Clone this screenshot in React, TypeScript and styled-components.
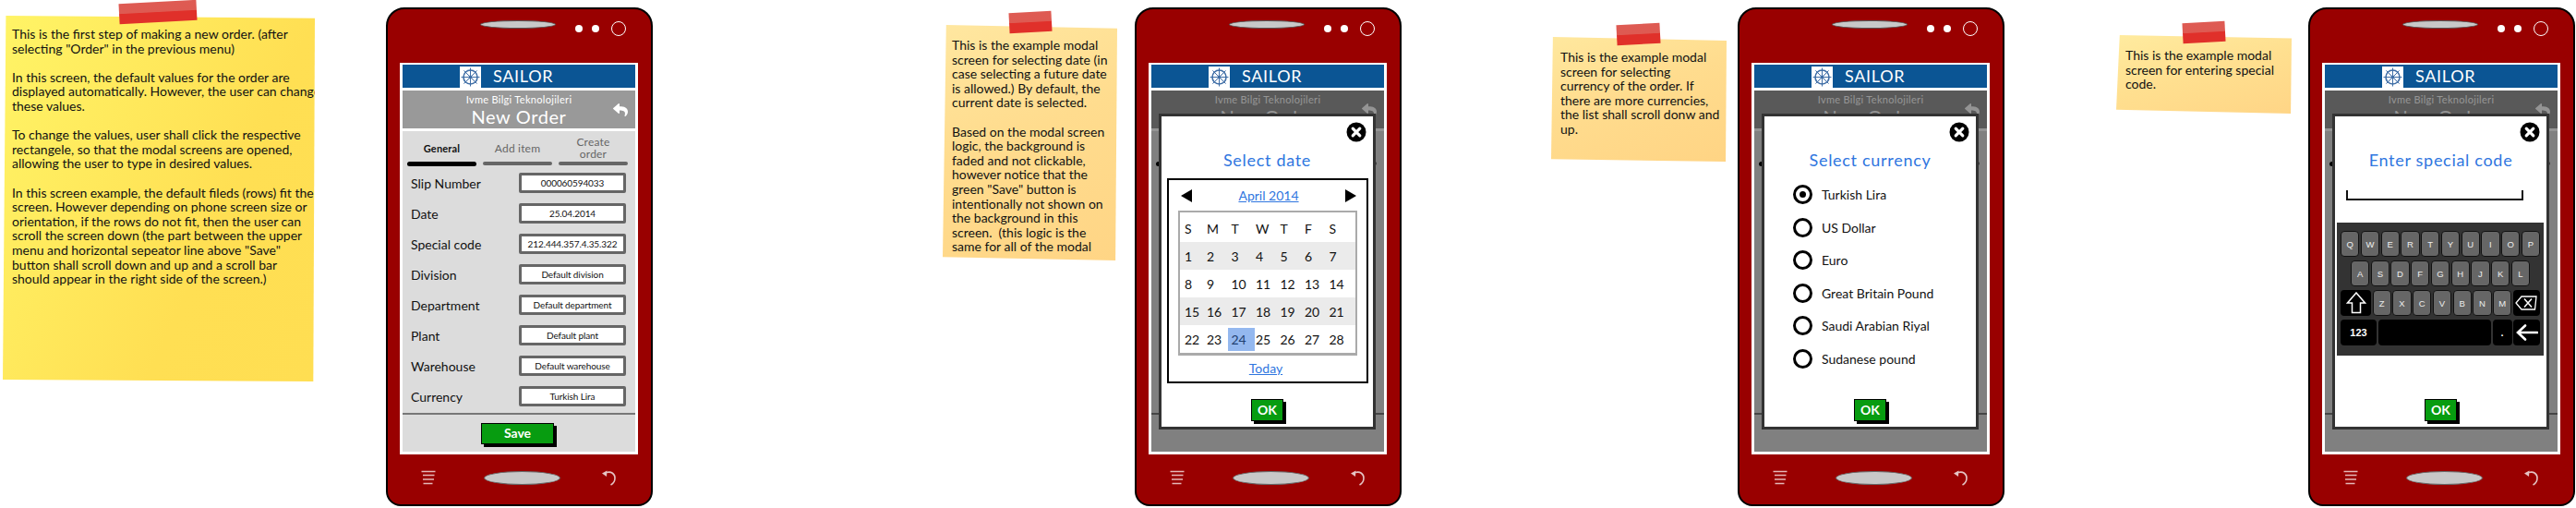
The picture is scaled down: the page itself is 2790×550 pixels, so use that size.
import React from "react";
import styled, { createGlobalStyle } from "styled-components";
import { FaReply } from "react-icons/fa";

const GlobalStyle = createGlobalStyle`
  html, body {
    margin: 0;
    padding: 0;
    background: #ffffff;
    font-family: "Lato", "Noto Sans", sans-serif;
  }
`;

const FIELDS = [
  ["Slip Number", "000060594033"],
  ["Date", "25.04.2014"],
  ["Special code", "212.444.357.4.35.322"],
  ["Division", "Default division"],
  ["Department", "Default department"],
  ["Plant", "Default plant"],
  ["Warehouse", "Default warehouse"],
  ["Currency", "Turkish Lira"],
];

const CURRENCIES = [
  "Turkish Lira",
  "US Dollar",
  "Euro",
  "Great Britain Pound",
  "Saudi Arabian Riyal",
  "Sudanese pound",
];

const WEEK = ["S", "M", "T", "W", "T", "F", "S"];
const WEEKS = [
  [1, 2, 3, 4, 5, 6, 7],
  [8, 9, 10, 11, 12, 13, 14],
  [15, 16, 17, 18, 19, 20, 21],
  [22, 23, 24, 25, 26, 27, 28],
];

const NOTE_1 = `This is the first step of making a new order. (after
selecting "Order" in the previous menu)

In this screen, the default values for the order are
displayed automatically. However, the user can change
these values.

To change the values, user shall click the respective
rectangele, so that the modal screens are opened,
allowing the user to type in desired values.

In this screen example, the default fileds (rows) fit the
screen. However depending on phone screen size or
orientation, if the rows do not fit, then the user can
scroll the screen down (the part between the upper
menu and horizontal sepeator line above "Save"
button shall scroll down and up and a scroll bar
should appear in the right side of the screen.)`;

const NOTE_2 = `This is the example modal
screen for selecting date (in
case selecting a future date
is allowed.) By default, the
current date is selected.

Based on the modal screen
logic, the background is
faded and not clickable,
however notice that the
green "Save" button is
intentionally not shown on
the background in this
screen.  (this logic is the
same for all of the modal`;

const NOTE_3 = `This is the example modal
screen for selecting
currency of the order. If
there are more currencies,
the list shall scroll donw and
up.`;

const NOTE_4 = `This is the example modal
screen for entering special
code.`;

const Logo = () => (
  <LogoBox>
    <svg width="23" height="23" viewBox="0 0 23 23" fill="none" stroke="#3f6ea6">
      <circle cx="11.5" cy="11.5" r="7.5" strokeWidth="1.6" />
      <circle cx="11.5" cy="11.5" r="2" fill="#3f6ea6" stroke="none" />
      <path
        d="M11.5 1.5v20M1.5 11.5h20M4.4 4.4l14.2 14.2M18.6 4.4L4.4 18.6"
        strokeWidth="1"
      />
    </svg>
  </LogoBox>
);

const CloseIcon = () => (
  <svg width="22" height="22" viewBox="0 0 22 22">
    <circle cx="11" cy="11" r="10.5" fill="#000" />
    <path
      d="M7.2 7.2l7.6 7.6M14.8 7.2l-7.6 7.6"
      stroke="#fff"
      strokeWidth="3.2"
      strokeLinecap="round"
    />
  </svg>
);

const MenuIcon = () => (
  <svg width="16" height="16" viewBox="0 0 16 16" stroke="#e5b8b8" fill="none">
    <path d="M0.5 1.5h15M2 5.5h12.5M2 10h12M2.5 14.5h10" strokeWidth="1.6" />
  </svg>
);

const BackIcon = () => (
  <svg width="17" height="17" viewBox="0 0 17 17" fill="none" stroke="#e5c4c4">
    <path d="M6 2.5c5-1.5 9 1.5 9 6 0 3-1.500 6-4.500 7.500" strokeWidth="1.6" />
    <path d="M1 3.500L6.500 0.500 6 7z" fill="#e5c4c4" stroke="none" />
  </svg>
);

const ShiftIcon = () => (
  <svg width="22" height="24" viewBox="0 0 22 24" fill="none" stroke="#fff">
    <path d="M11 1L1.500 12H6.500V22.500H15.500V12H20.500Z" strokeWidth="1.500" />
  </svg>
);

const BackspaceIcon = () => (
  <svg width="24" height="16" viewBox="0 0 24 16" fill="none" stroke="#fff">
    <path d="M7 1H23L21.500 15H7L1 8Z" strokeWidth="1.300" />
    <path d="M10 3.500l8 9M18 3.500l-8 9" strokeWidth="1.500" />
  </svg>
);

const EnterIcon = () => (
  <svg width="24" height="18" viewBox="0 0 24 18" fill="none" stroke="#fff">
    <path
      d="M23 9H3M10 1.500L2 9l8 7.500"
      strokeWidth="2.600"
      strokeLinecap="round"
    />
  </svg>
);

type NoteProps = {
  text: string;
  gap: number;
  top: number;
  width: number;
  height: number;
  tint: string;
  tape: [number, number, number];
  edge: string;
};

const Note = ({ text, gap, top, width, height, tint, tape, edge }: NoteProps) => (
  <NoteWrap $gap={gap} $top={top} $width={width} $height={height}>
    <NoteSheet $tint={tint} $edge={edge}>
      {text}
    </NoteSheet>
    <Tape $left={tape[0]} $top={tape[1]} $width={tape[2]} />
  </NoteWrap>
);

// behind a modal the labels and rows are covered, only the bars stick out
const OrderForm = ({ covered }: { covered: boolean }) => (
  <FormArea>
    <Tabs>
      <Tab>
        <TabLabel $active>{!covered && "General"}</TabLabel>
        <TabBar $active />
      </Tab>
      <Tab>
        <TabLabel>{!covered && "Add item"}</TabLabel>
        <TabBar />
      </Tab>
      <Tab>
        <TabLabel>
          {!covered && (
            <>
              Create
              <br />
              order
            </>
          )}
        </TabLabel>
        <TabBar />
      </Tab>
    </Tabs>
    <FieldList>
      {!covered &&
        FIELDS.map(([label, value]) => (
          <FieldRow key={label}>
            <FieldLabel>{label}</FieldLabel>
            <FieldValue>{value}</FieldValue>
          </FieldRow>
        ))}
    </FieldList>
    <Separator />
    {!covered && <SaveButton>Save</SaveButton>}
  </FormArea>
);

const Modal = ({ title, children }: { title: string; children: React.ReactNode }) => (
  <ModalBox>
    <CloseSpot>
      <CloseIcon />
    </CloseSpot>
    <ModalTitle>{title}</ModalTitle>
    {children}
    <OkButton>OK</OkButton>
  </ModalBox>
);

const Phone = ({ gap, children }: { gap: number; children?: React.ReactNode }) => (
  <PhoneBody $gap={gap}>
    <PhoneTop>
      <Speaker />
      <Dot />
      <Dot />
      <Lens />
    </PhoneTop>
    <Screen>
      <AppHeader>
        <Logo />
        <AppName>SAILOR</AppName>
      </AppHeader>
      <ScreenBody>
        <SubHeader>
          <Company>Ivme Bilgi Teknolojileri</Company>
          <PageTitle>New Order</PageTitle>
          <ReplySpot>
            <FaReply size={16} color="#fff" />
          </ReplySpot>
        </SubHeader>
        <OrderForm covered={!!children} />
        {children && <Fade />}
        {children}
      </ScreenBody>
    </Screen>
    <PhoneBottom>
      <MenuIcon />
      <HomeButton />
      <BackIcon />
    </PhoneBottom>
  </PhoneBody>
);

const Calendar = () => (
  <CalendarBox>
    <MonthRow>
      <ArrowLeft />
      <LinkText>April 2014</LinkText>
      <ArrowRight />
    </MonthRow>
    <DayTable>
      <DayRow>
        {WEEK.map((d, i) => (
          <DayCell key={i}>{d}</DayCell>
        ))}
      </DayRow>
      {WEEKS.map((week, i) => (
        <DayRow key={i} $shaded={i % 2 === 0}>
          {week.map((d) => (
            <DayCell key={d} $selected={d === 24}>
              {d}
            </DayCell>
          ))}
        </DayRow>
      ))}
    </DayTable>
    <TodayRow>
      <LinkText>Today</LinkText>
    </TodayRow>
  </CalendarBox>
);

const CurrencyList = () => (
  <RadioList>
    {CURRENCIES.map((name, i) => (
      <RadioRow key={name}>
        <Radio $checked={i === 0} />
        <RadioLabel>{name}</RadioLabel>
      </RadioRow>
    ))}
  </RadioList>
);

const Keyboard = () => (
  <>
    <InputLine />
    <KeyboardBox>
      <KeyRow>
        {"QWERTYUIOP".split("").map((k) => (
          <Key key={k}>{k}</Key>
        ))}
      </KeyRow>
      <KeyRow $inset={11}>
        {"ASDFGHJKL".split("").map((k) => (
          <Key key={k}>{k}</Key>
        ))}
      </KeyRow>
      <KeyRow>
        <DarkKey $width={33}>
          <ShiftIcon />
        </DarkKey>
        {"ZXCVBNM".split("").map((k) => (
          <Key key={k}>{k}</Key>
        ))}
        <DarkKey $width={29}>
          <BackspaceIcon />
        </DarkKey>
      </KeyRow>
      <KeyRow>
        <DarkKey $width={39}>123</DarkKey>
        <DarkKey $grow />
        <DarkKey $width={21}>.</DarkKey>
        <DarkKey $width={29}>
          <EnterIcon />
        </DarkKey>
      </KeyRow>
    </KeyboardBox>
  </>
);

export default function App() {
  return (
    <Page>
      <GlobalStyle />
      <Note
        text={NOTE_1}
        gap={3}
        top={15}
        width={338}
        height={398}
        tint="linear-gradient(115deg, #fff466 0%, #ffe95c 35%, #ffdf53 65%, #ffde52 100%)"
        tape={[126, -13, 84]}
        edge="polygon(1% 0.500%, 100% 1.200%, 99.500% 100%, 0% 99.500%)"
      />
      <Phone gap={77} />
      <Note
        text={NOTE_2}
        gap={314}
        top={27}
        width={189}
        height={255}
        tint="linear-gradient(160deg, #ffe7a0 0%, #ffdc8e 45%, #ffd585 100%)"
        tape={[72, -14, 46]}
        edge="polygon(2% 0%, 100% 1.500%, 99% 100%, 0% 98.500%)"
      />
      <Phone gap={19}>
        <Modal title="Select date">
          <Calendar />
        </Modal>
      </Phone>
      <Note
        text={NOTE_3}
        gap={162}
        top={40}
        width={190}
        height={135}
        tint="linear-gradient(160deg, #ffe89e 0%, #ffdc8e 45%, #ffd484 100%)"
        tape={[71, -14, 47]}
        edge="polygon(1% 0%, 100% 3%, 99.500% 100%, 0% 98%)"
      />
      <Phone gap={12}>
        <Modal title="Select currency">
          <CurrencyList />
        </Modal>
      </Phone>
      <Note
        text={NOTE_4}
        gap={121}
        top={38}
        width={190}
        height={85}
        tint="linear-gradient(165deg, #ffeb9f 0%, #ffdf8f 50%, #ffd586 100%)"
        tape={[72, -14, 46]}
        edge="polygon(2% 0%, 100% 4%, 99.500% 100%, 0% 95%)"
      />
      <Phone gap={18}>
        <Modal title="Enter special code">
          <Keyboard />
        </Modal>
      </Phone>
    </Page>
  );
}

const Page = styled.div`
  display: flex;
  align-items: flex-start;
  width: 2790px;
  height: 550px;
  overflow: hidden;
`;

const NoteWrap = styled.div<{ $gap: number; $top: number; $width: number; $height: number }>`
  position: relative;
  flex: none;
  margin-left: ${(p) => p.$gap}px;
  margin-top: ${(p) => p.$top}px;
  width: ${(p) => p.$width}px;
  height: ${(p) => p.$height}px;
`;

const NoteSheet = styled.div<{ $tint: string; $edge: string }>`
  box-sizing: border-box;
  height: 100%;
  padding: 14px 0 0 10px;
  background: ${(p) => p.$tint};
  clip-path: ${(p) => p.$edge};
  color: #111;
  font-size: 14px;
  line-height: 15.6px;
  white-space: pre;
`;

const Tape = styled.div<{ $left: number; $top: number; $width: number }>`
  position: absolute;
  left: ${(p) => p.$left}px;
  top: ${(p) => p.$top}px;
  width: ${(p) => p.$width}px;
  height: 22px;
  background: linear-gradient(180deg, #de5b53 0%, #de5a52 48%, #e0302a 52%, #e0302a 100%);
  transform: rotate(-3deg);
`;

const PhoneBody = styled.div<{ $gap: number }>`
  flex: none;
  box-sizing: border-box;
  display: flex;
  flex-direction: column;
  width: 289px;
  height: 540px;
  margin-top: 8px;
  margin-left: ${(p) => p.$gap}px;
  background: #990000;
  border: 2px solid #000;
  border-radius: 20px 20px 16px 16px;
`;

const PhoneTop = styled.div`
  display: flex;
  align-items: flex-start;
  gap: 10px;
  height: 58px;
  box-sizing: border-box;
  padding: 12px 0 0 100px;
`;

const Speaker = styled.div`
  box-sizing: border-box;
  width: 82px;
  height: 9px;
  margin-right: 11px;
  background: #c8c8c8;
  border: 1px solid #555;
  border-radius: 50%;
`;

const Dot = styled.div`
  width: 8px;
  height: 8px;
  margin-top: 5px;
  background: #fff;
  border-radius: 50%;
`;

const Lens = styled.div`
  box-sizing: border-box;
  width: 16px;
  height: 16px;
  margin: 1px 0 0 3px;
  border: 1.5px solid #fff;
  border-radius: 50%;
`;

const Screen = styled.div`
  box-sizing: border-box;
  display: flex;
  flex-direction: column;
  gap: 3px;
  width: 258px;
  height: 424px;
  margin-left: 13px;
  padding: 2px 3px 3px;
  background: #fff;
`;

const AppHeader = styled.div`
  flex: none;
  display: flex;
  align-items: flex-end;
  height: 25px;
  padding-left: 62px;
  background: #0b5594;
`;

const LogoBox = styled.div`
  display: flex;
  width: 23px;
  height: 23px;
  background: #fff;
`;

const AppName = styled.div`
  margin-left: 13px;
  height: 25px;
  color: #fff;
  font-size: 18px;
  line-height: 25px;
  letter-spacing: 0.7px;
`;

const ScreenBody = styled.div`
  position: relative;
  flex: 1;
  display: flex;
  flex-direction: column;
  gap: 3px;
`;

const SubHeader = styled.div`
  position: relative;
  flex: none;
  height: 41px;
  display: flex;
  flex-direction: column;
  align-items: center;
  background: #999;
  color: #fff;
`;

const Company = styled.div`
  margin-top: 3px;
  font-size: 11px;
  line-height: 14px;
  letter-spacing: 0.3px;
`;

const PageTitle = styled.div`
  font-size: 20px;
  line-height: 22px;
  letter-spacing: 0.6px;
`;

const ReplySpot = styled.div`
  position: absolute;
  right: 8px;
  top: 13px;
  display: flex;
`;

const FormArea = styled.div`
  flex: 1;
  display: flex;
  flex-direction: column;
  background: #dcdcdc;
`;

const Tabs = styled.div`
  display: flex;
  gap: 7px;
  padding: 3px 7px 0 5px;
`;

const Tab = styled.div`
  flex: none;
  width: 75px;
  display: flex;
  flex-direction: column;
`;

const TabLabel = styled.div<{ $active?: boolean }>`
  display: flex;
  align-items: center;
  justify-content: center;
  height: 30px;
  text-align: center;
  font-size: ${(p) => (p.$active ? "11px" : "12px")};
  font-weight: ${(p) => (p.$active ? 700 : 400)};
  line-height: 13px;
  letter-spacing: 0.2px;
  color: ${(p) => (p.$active ? "#111" : "#666")};
`;

const TabBar = styled.div<{ $active?: boolean }>`
  height: ${(p) => (p.$active ? 5 : 4)}px;
  background: ${(p) => (p.$active ? "#000" : "#666")};
  border-radius: 3px;
`;

const FieldList = styled.div`
  display: flex;
  flex-direction: column;
  gap: 11px;
  height: 253px;
  margin-top: 7px;
  padding: 0 10px 0 9px;
`;

const FieldRow = styled.div`
  display: flex;
  align-items: center;
  justify-content: space-between;
  height: 22px;
`;

const FieldLabel = styled.div`
  font-size: 14px;
  color: #111;
`;

const FieldValue = styled.div`
  box-sizing: border-box;
  width: 116px;
  height: 22px;
  border: 3px solid #666;
  border-radius: 2px;
  background: #fff;
  text-align: center;
  font-size: 10px;
  line-height: 16px;
  letter-spacing: -0.1px;
  color: #111;
  white-space: nowrap;
`;

const Separator = styled.div`
  height: 2px;
  margin-top: 7px;
  background: #777;
`;

const SaveButton = styled.div`
  box-sizing: border-box;
  align-self: center;
  width: 79px;
  height: 23px;
  margin: 9px 0 0 -3px;
  background: #079c10;
  border: 1.500px solid #000;
  box-shadow: 3px 3px 0 #000;
  color: #fff;
  text-align: center;
  font-size: 14px;
  font-weight: 700;
  line-height: 20px;
`;

const Fade = styled.div`
  position: absolute;
  inset: 0;
  background: rgba(0, 0, 0, 0.42);
`;

const ModalBox = styled.div`
  position: absolute;
  left: 8px;
  top: 25px;
  box-sizing: border-box;
  display: flex;
  flex-direction: column;
  width: 235px;
  height: 342px;
  padding-bottom: 6px;
  background: #fff;
  border: 3px solid #333;
`;

const CloseSpot = styled.div`
  position: absolute;
  right: 7px;
  top: 6px;
  display: flex;
`;

const ModalTitle = styled.div`
  margin-top: 36px;
  height: 22px;
  text-align: center;
  color: #2f76e0;
  font-size: 18px;
  line-height: 22px;
  letter-spacing: 0.7px;
`;

const OkButton = styled.div`
  box-sizing: border-box;
  align-self: center;
  width: 35px;
  height: 24px;
  margin-top: auto;
  background: #079c10;
  border: 1.500px solid #000;
  box-shadow: 3px 3px 0 #000;
  color: #fff;
  text-align: center;
  font-size: 14px;
  font-weight: 700;
  line-height: 21px;
`;

const CalendarBox = styled.div`
  box-sizing: border-box;
  width: 218px;
  height: 222px;
  margin: 9px 0 0 6px;
  padding: 0 10px;
  border: 2px solid #000;
`;

const MonthRow = styled.div`
  display: flex;
  align-items: center;
  justify-content: space-between;
  height: 33px;
  padding: 0 1px 0 3px;
`;

const ArrowLeft = styled.div`
  width: 0;
  height: 0;
  border-top: 7px solid transparent;
  border-bottom: 7px solid transparent;
  border-right: 12px solid #000;
`;

const ArrowRight = styled.div`
  width: 0;
  height: 0;
  border-top: 7px solid transparent;
  border-bottom: 7px solid transparent;
  border-left: 12px solid #000;
`;

const LinkText = styled.span`
  color: #2f76e0;
  font-size: 14px;
  text-decoration: underline;
`;

const DayTable = styled.div`
  height: 157px;
  box-sizing: border-box;
  border: 2px solid #aaa;
  border-width: 2px 2px 3px;
  padding-top: 2px;
`;

const DayRow = styled.div<{ $shaded?: boolean }>`
  display: grid;
  grid-template-columns: 24px repeat(6, 26.500px);
  align-items: center;
  height: 30px;
  padding-left: 5px;
  background: ${(p) => (p.$shaded ? "#ebebeb" : "#fff")};
`;

const DayCell = styled.div<{ $selected?: boolean }>`
  height: 25px;
  font-size: 14px;
  line-height: 25px;
  color: ${(p) => (p.$selected ? "#1f3f70" : "#111")};
  ${(p) =>
    p.$selected &&
    `
    margin: 0 1px 0 -4px;
    padding-left: 4px;
    background: #94b8ef;
  `}
`;

const TodayRow = styled.div`
  display: flex;
  justify-content: center;
  margin-top: 5px;
  padding-right: 4px;
`;

const RadioList = styled.div`
  display: flex;
  flex-direction: column;
  gap: 14.500px;
  margin-top: 16px;
  padding-left: 31px;
`;

const RadioRow = styled.div`
  display: flex;
  align-items: center;
  gap: 10px;
  height: 21px;
`;

const Radio = styled.div<{ $checked?: boolean }>`
  box-sizing: border-box;
  display: flex;
  align-items: center;
  justify-content: center;
  width: 21px;
  height: 21px;
  border: 3px solid #000;
  border-radius: 50%;

  &::after {
    content: "";
    display: ${(p) => (p.$checked ? "block" : "none")};
    width: 7px;
    height: 7px;
    border-radius: 50%;
    background: #000;
  }
`;

const RadioLabel = styled.div`
  font-size: 14px;
  color: #111;
`;

const InputLine = styled.div`
  box-sizing: border-box;
  width: 192px;
  height: 11px;
  margin: 22px 0 0 12px;
  border: 2px solid #111;
  border-top: 0;
`;

const KeyboardBox = styled.div`
  box-sizing: border-box;
  display: flex;
  flex-direction: column;
  gap: 4px;
  width: 224px;
  height: 144px;
  margin: 24px 0 0 2px;
  padding: 9px 4px 0;
  background: #333;
`;

const KeyRow = styled.div<{ $inset?: number }>`
  display: flex;
  gap: 1.500px;
  height: 28px;
  padding: 0 ${(p) => p.$inset ?? 0}px;
`;

const Key = styled.div`
  box-sizing: border-box;
  flex: 1;
  display: flex;
  align-items: center;
  justify-content: center;
  background: #666;
  border: 1.500px solid #111;
  border-radius: 4px;
  color: #eee;
  font-family: "Liberation Sans", sans-serif;
  font-size: 9.500px;
`;

const DarkKey = styled.div<{ $width?: number; $grow?: boolean }>`
  box-sizing: border-box;
  flex: ${(p) => (p.$grow ? "1" : "none")};
  width: ${(p) => (p.$width ? `${p.$width}px` : "auto")};
  display: flex;
  align-items: center;
  justify-content: center;
  background: #000;
  border-radius: 4px;
  color: #fff;
  font-family: "Liberation Sans", sans-serif;
  font-size: 11px;
  font-weight: 700;
`;

const PhoneBottom = styled.div`
  flex: 1;
  display: flex;
  align-items: center;
  padding: 0 0 4px 36px;

  svg:last-child {
    margin-left: 44px;
  }
`;

const HomeButton = styled.div`
  box-sizing: border-box;
  width: 83px;
  height: 15px;
  margin-left: 52px;
  background: #c8c8c8;
  border: 1px solid #666;
  border-radius: 50%;
`;
